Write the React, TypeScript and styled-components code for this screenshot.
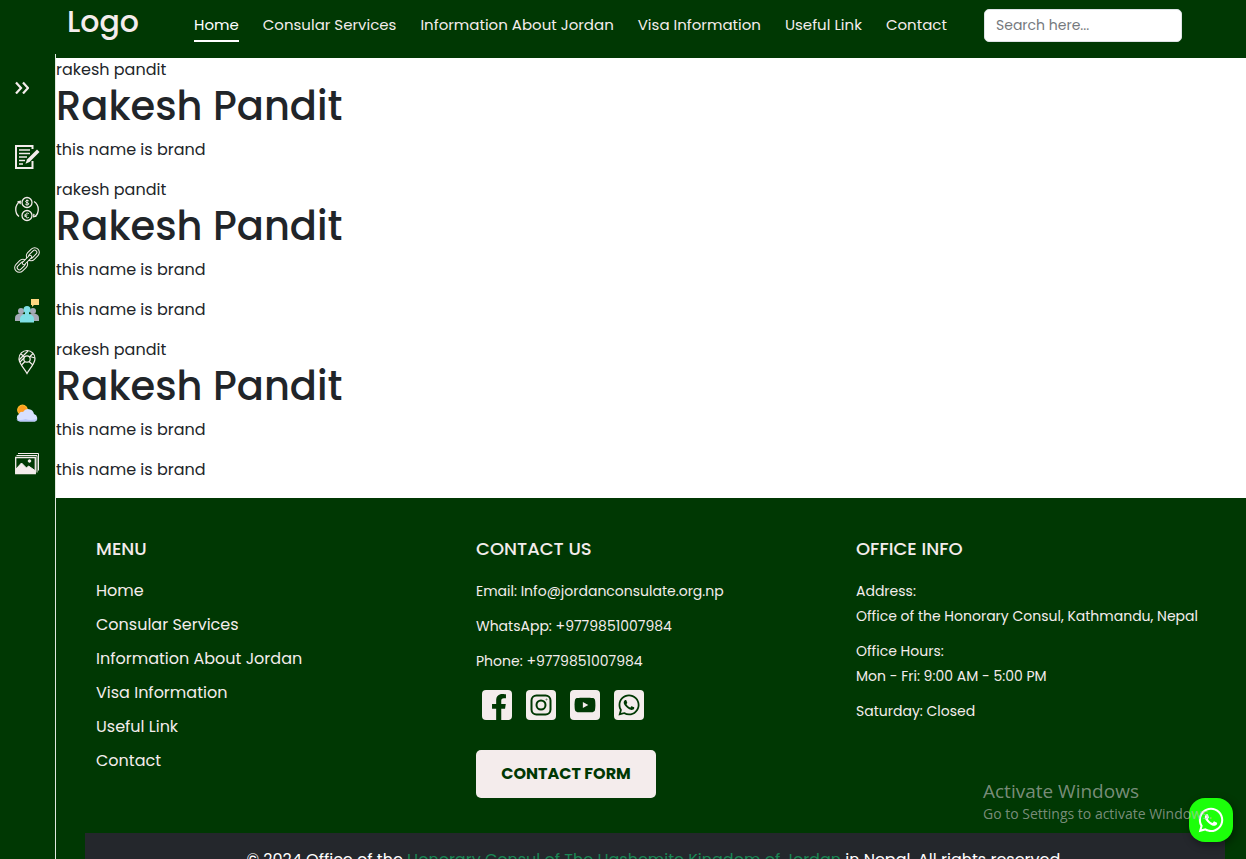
import React from "react";
import styled, { createGlobalStyle } from "styled-components";
import { FaFacebookF, FaWhatsapp, FaYoutube } from "react-icons/fa";

const green = "#003803";
const cream = "#f4ecec";

const GlobalStyle = createGlobalStyle`
  *, *::before, *::after { box-sizing: border-box; }
  body {
    margin: 0;
    background: #fff;
    color: #212529;
    font-family: Poppins, Inter, "Liberation Sans", sans-serif;
    font-size: 16px;
    line-height: 24px;
  }
  ul { list-style: none; margin: 0; padding: 0; }
  a { color: inherit; text-decoration: none; }
`;

const Shell = styled.div`
  position: relative;
  display: flex;
  flex-direction: column;
  height: 100vh;
  overflow: hidden;
`;

const Header = styled.header`
  display: flex;
  flex: none;
  align-items: flex-start;
  height: 58px;
  padding: 0 64px 0 67px;
  background: ${green};
  color: ${cream};
`;

const Logo = styled.a`
  width: 127px;
  font-size: 30px;
  font-weight: 500;
  line-height: 44px;
`;

const NavList = styled.ul`
  display: flex;
  gap: 24px;
  padding-top: 9px;
`;

const NavLink = styled.a<{ $active?: boolean }>`
  display: block;
  height: 33px;
  border-bottom: 2px solid ${(p) => (p.$active ? "#fff" : "transparent")};
  color: ${(p) => (p.$active ? "#fff" : cream)};
  font-size: 15px;
  line-height: 31px;
  white-space: nowrap;
`;

const Search = styled.input`
  width: 198px;
  height: 33px;
  margin: 9px 0 0 auto;
  padding: 0 11px;
  border: 1px solid #dee2e6;
  border-radius: 5px;
  background: #fff;
  color: #212529;
  font: inherit;
  font-size: 14px;
  &::placeholder { color: #75797d; opacity: 1; }
`;

const Body = styled.div`
  display: flex;
  flex: 1;
  min-height: 0;
`;

const Sidebar = styled.nav`
  flex: none;
  width: 56px;
  margin-top: -4px;
  padding: 21px 0 0 15px;
  border-right: 1px solid #dfe8df;
  background: ${green};
  color: ${cream};
`;

const Toggle = styled.button`
  display: flex;
  align-items: center;
  width: 24px;
  height: 24px;
  margin-bottom: 47px;
  padding: 0;
  border: 0;
  background: none;
  color: inherit;
`;

const SideList = styled.ul`
  display: grid;
  gap: 27px;
`;

const SideLink = styled.a`
  display: block;
  width: 24px;
  height: 24px;
  svg { display: block; width: 24px; height: 24px; overflow: visible; }
`;

const Content = styled.div`
  flex: 1;
  min-width: 0;
  overflow-y: auto;
  scrollbar-width: none;
`;

const Name = styled.div``;

const Title = styled.h1`
  margin: 0 0 8px;
  font-size: 40px;
  font-weight: 500;
  line-height: 48px;
`;

const Text = styled.p`
  margin: 0 0 16px;
`;

const Footer = styled.footer`
  background: ${green};
  color: ${cream};
`;

const Columns = styled.div`
  display: grid;
  grid-template-columns: repeat(3, 1fr);
  padding: 38px 10px 35px 40px;
`;

const Heading = styled.h2`
  margin: 0 0 17px;
  font-size: 18px;
  font-weight: 500;
  line-height: 26px;
`;

const MenuLink = styled.a`
  display: block;
  height: 34px;
  line-height: 24px;
`;

const Info = styled.p`
  margin: 0 0 10px;
  font-size: 14px;
  line-height: 25px;
`;

const Socials = styled.ul`
  display: flex;
  gap: 14px;
  margin: 16px 0 30px;
  padding-left: 6px;
`;

const SocialLink = styled.a<{ $corner?: boolean }>`
  display: flex;
  align-items: ${(p) => (p.$corner ? "flex-end" : "center")};
  justify-content: ${(p) => (p.$corner ? "flex-end" : "center")};
  width: 30px;
  height: 30px;
  border-radius: 4px;
  background: ${cream};
  color: ${green};
`;

const FormButton = styled.button`
  width: 180px;
  height: 48px;
  padding: 0;
  border: 0;
  border-radius: 5px;
  background: ${cream};
  color: ${green};
  font: inherit;
  font-weight: 700;
`;

const Copyright = styled.div`
  margin: 0 21px 0 29px;
  padding: 15px 0 16px;
  background: #24272c;
  color: #fff;
  text-align: center;
  a { color: #198754; }
`;

const Watermark = styled.div`
  position: absolute;
  right: 51px;
  bottom: 35px;
  z-index: 3;
  width: 212px;
  color: rgba(190, 190, 190, 0.65);
  font-family: "Open Sans", "Noto Sans", sans-serif;
  font-size: 14px;
  line-height: 20px;
  white-space: nowrap;
  pointer-events: none;
`;

const WatermarkTitle = styled.div`
  font-size: 19px;
  line-height: 26px;
`;

const ChatLink = styled.a`
  position: absolute;
  right: 13px;
  bottom: 17px;
  z-index: 2;
  display: flex;
  align-items: center;
  justify-content: center;
  width: 44px;
  height: 44px;
  border-radius: 16px;
  background: #1cff0a;
  box-shadow: 2px 3px 8px rgba(0, 0, 0, 0.4);
  color: #fff;
`;

const FormIcon = () => (
  <svg viewBox="0 0 24 24" fill="none" stroke="currentColor" strokeWidth="2">
    <path d="M17.500 3V0H1v22h16.500v-7" />
    <path d="M4 4h11M4 7.500h11M4 11h8M4 14.500h6M4 18h4" strokeWidth="1.500" />
    <path d="M22 3.500 24.500 6 14.500 16l-4 1.800 1.500-4.300z" fill="currentColor" stroke="none" />
  </svg>
);

const CurrencyIcon = () => (
  <svg viewBox="0 0 24 24" fill="none" stroke="currentColor" strokeWidth="1.300">
    <circle cx="12" cy="5.500" r="5" />
    <circle cx="12" cy="18.500" r="5" />
    <path d="M13.800 4c-.5-.8-3.200-.9-3.200.4 0 1.600 3.200.8 3.200 2.500 0 1.300-2.700 1.300-3.500.2M12 2.500v6M14 16.800c-1.700-1.500-3.800-.2-3.800 1.700s2.100 3.200 3.800 1.700M9.500 18h3M9.500 19.200h2.500" strokeWidth="1" />
    <path d="M5 4.500C-.5 8-.5 16 4 19.500M19 4.500c5.500 3.500 5.500 11.500 1 15M2.500 4.800l2.800-.5-.2 2.800M21.500 19.200l-2.800.5.200-2.800" />
  </svg>
);

const ChainIcon = () => (
  <svg viewBox="0 0 24 24" fill="none" stroke="currentColor" strokeWidth="1">
    <g transform="rotate(-45 12 12)">
      <rect x="-3.500" y="7.300" width="14.500" height="9.400" rx="4.700" />
      <rect x="-1" y="9.800" width="9.500" height="4.400" rx="2.200" />
      <rect x="13" y="7.300" width="14.500" height="9.400" rx="4.700" />
      <rect x="15.500" y="9.800" width="9.500" height="4.400" rx="2.200" />
      <rect x="6" y="10.500" width="12" height="3" rx="1.500" fill={green} />
    </g>
  </svg>
);

const PeopleIcon = () => (
  <svg viewBox="0 0 24 24">
    <path d="M16 0h8v6h-5l-2 2V6h-1z" fill="#ffd782" />
    <g fill="#a5aab8">
      <circle cx="6" cy="12" r="3" />
      <path d="M0 22v-3c0-3 2-4.500 6-4.500s5 2 5 7.500z" />
      <circle cx="18" cy="12" r="3" />
      <path d="M24 22v-3c0-3-2-4.500-6-4.500s-5 2-5 7.500z" />
    </g>
    <circle cx="12" cy="10.500" r="3.500" fill="#7fe0e6" />
    <path d="M5 23.500V20c0-3 2-4 5-5v-2h4v2c3 1 5 2 5 5v3.500z" fill="#7fe0e6" />
  </svg>
);

const PinIcon = () => (
  <svg viewBox="0 0 24 24" fill="none" stroke="currentColor" strokeWidth="1.200">
    <path d="M12 23.500C9.500 18.500 4 14 4 8.500a8 8 0 0 1 16 0c0 5.500-5.500 10-8 15z" />
    <circle cx="12" cy="9" r="3.200" />
    <path d="m6 4 3.500 3M13 1l-9 9M18 3.500 14.500 7M20 8l-5-1.500M14 11.500l4 3.500M10 11.500 6.500 15M5 12l4-4" />
  </svg>
);

const WeatherIcon = () => (
  <svg viewBox="0 0 24 24">
    <circle cx="7.500" cy="9" r="4.800" fill="#ff9d1f" stroke="#ffb92b" strokeWidth="1.200" />
    <path d="M5 20.500a4 4 0 0 1-1-7.500 3.500 3.500 0 0 1 4-2 6 6 0 0 1 11 2 4 4 0 0 1 1 7.500z" fill="#d7e0ff" />
    <path d="M1.500 18c2 1.500 6 1 9 0 4 1.500 9 1 12-.5-.5 2-1.500 3-3 3H5c-2 0-3-1-3.500-2.500z" fill="#bac8fa" />
  </svg>
);

const GalleryIcon = () => (
  <svg viewBox="0 0 24 24" fill="none" stroke="currentColor" strokeWidth="1">
    <path d="M3 1.500h20.500v17M1.500 3.500H22v17" />
    <path d="M.7 5.500h19.600v16H.7z" strokeWidth="1.300" />
    <path d="M1 17 6.500 11l5 5 2-2 6.500 4.500v2.500H1z" fill="currentColor" />
    <circle cx="14.500" cy="9" r="1.300" fill="currentColor" />
  </svg>
);

const InstagramIcon = () => (
  <svg width="22" height="22" viewBox="0 0 22 22" fill="none" stroke="currentColor" strokeWidth="2">
    <rect x="1.500" y="1.500" width="19" height="19" rx="5" />
    <circle cx="11" cy="11" r="4.500" />
    <circle cx="16.500" cy="5.500" r=".6" strokeWidth=".5" />
  </svg>
);

const menu = ["Home", "Consular Services", "Information About Jordan", "Visa Information", "Useful Link", "Contact"];

const tools = [
  { label: "Forms", Icon: FormIcon },
  { label: "Currency", Icon: CurrencyIcon },
  { label: "Links", Icon: ChainIcon },
  { label: "Community", Icon: PeopleIcon },
  { label: "Location", Icon: PinIcon },
  { label: "Weather", Icon: WeatherIcon },
  { label: "Gallery", Icon: GalleryIcon },
];

const entries = [1, 2, 2];

export default function App() {
  return (
    <Shell>
      <GlobalStyle />
      <Header>
        <Logo href="#">Logo</Logo>
        <nav>
          <NavList>
            {menu.map((item, i) => (
              <li key={item}><NavLink href="#" $active={i === 0}>{item}</NavLink></li>
            ))}
          </NavList>
        </nav>
        <Search type="search" aria-label="Search" placeholder="Search here..." />
      </Header>
      <Body>
        <Sidebar>
          <Toggle aria-label="Expand sidebar">
            <svg width="14" height="14" viewBox="0 0 14 14" fill="none" stroke="currentColor" strokeWidth="2.200">
              <path d="m1 2.500 5 5.500-5 5.500M8 2.500 13 8l-5 5.500" />
            </svg>
          </Toggle>
          <SideList>
            {tools.map(({ label, Icon }) => (
              <li key={label}><SideLink href="#" aria-label={label}><Icon /></SideLink></li>
            ))}
          </SideList>
        </Sidebar>
        <Content>
          <main>
            {entries.map((count, i) => (
              <section key={i}>
                <Name>rakesh pandit</Name>
                <Title>Rakesh Pandit</Title>
                {Array.from({ length: count }, (_, n) => <Text key={n}>this name is brand</Text>)}
              </section>
            ))}
          </main>
          <Footer>
            <Columns>
              <section>
                <Heading>MENU</Heading>
                <ul>
                  {menu.map((item) => <li key={item}><MenuLink href="#">{item}</MenuLink></li>)}
                </ul>
              </section>
              <section>
                <Heading>CONTACT US</Heading>
                <Info>Email: Info@jordanconsulate.org.np</Info>
                <Info>WhatsApp: +9779851007984</Info>
                <Info>Phone: +9779851007984</Info>
                <Socials>
                  <li><SocialLink href="#" aria-label="Facebook" $corner><FaFacebookF size={26} /></SocialLink></li>
                  <li><SocialLink href="#" aria-label="Instagram"><InstagramIcon /></SocialLink></li>
                  <li><SocialLink href="#" aria-label="YouTube"><FaYoutube size={22} /></SocialLink></li>
                  <li><SocialLink href="#" aria-label="WhatsApp"><FaWhatsapp size={24} /></SocialLink></li>
                </Socials>
                <FormButton>CONTACT FORM</FormButton>
              </section>
              <section>
                <Heading>OFFICE INFO</Heading>
                <Info>Address:<br />Office of the Honorary Consul, Kathmandu, Nepal</Info>
                <Info>Office Hours:<br />Mon - Fri: 9:00 AM - 5:00 PM</Info>
                <Info>Saturday: Closed</Info>
              </section>
            </Columns>
            <Copyright>
              © 2024 Office of the <a href="#">Honorary Consul of The Hashemite Kingdom of Jordan</a> in Nepal. All rights reserved.
            </Copyright>
          </Footer>
        </Content>
      </Body>
      <ChatLink href="#" aria-label="Chat on WhatsApp"><FaWhatsapp size={28} /></ChatLink>
      <Watermark>
        <WatermarkTitle>Activate Windows</WatermarkTitle>
        <div>Go to Settings to activate Windows.</div>
      </Watermark>
    </Shell>
  );
}
